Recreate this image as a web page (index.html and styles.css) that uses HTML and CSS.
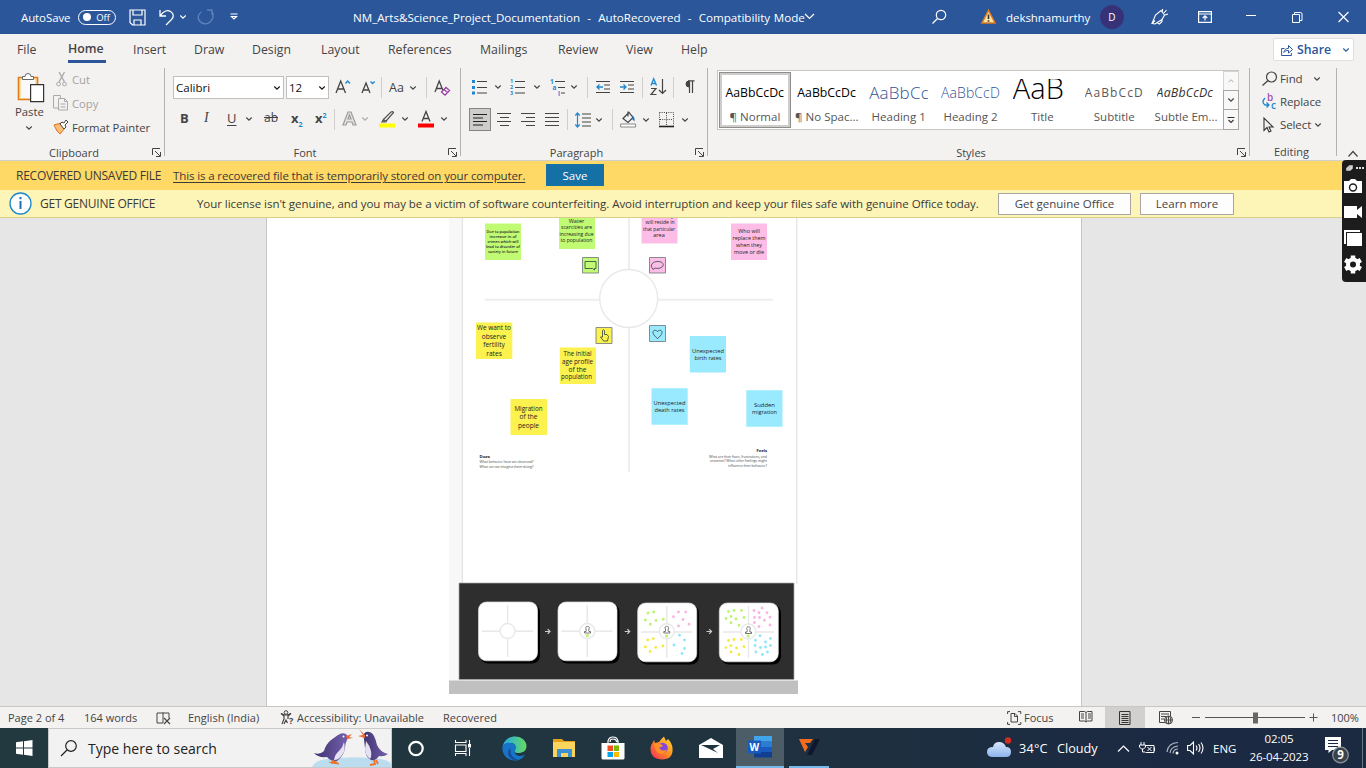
FILE: index.html
```html
<!DOCTYPE html>
<html lang="en">
<head>
<meta charset="utf-8">
<title>NM_Arts&amp;Science_Project_Documentation - Word</title>
<link rel="stylesheet" href="styles.css">
</head>
<body>
<svg class="defs" width="0" height="0">
  <symbol id="chev" viewBox="0 0 8 6"><path d="M1.300 1.500 4 4.200 6.700 1.500" fill="none" stroke="currentColor" stroke-width="1.150"/></symbol>
  <symbol id="launch" viewBox="0 0 9 9"><path d="M.5 7V.5H8M3 3l5 5M8.500 4v4.500H4" fill="none" stroke="#444" stroke-width="1"/></symbol>
  <symbol id="person" viewBox="0 0 8 9"><path d="M2.800 4.500C1.500 1 3 .8 4 .8S6.500 1 5.200 4.500L5.500 6H7v1.500H1V6h1.500z" fill="none" stroke="#555" stroke-width=".8"/></symbol>
</svg>
<div class="app">
  <header class="title">
    <span class="autosave">AutoSave</span>
    <span class="toggle"><i></i><b>Off</b></span>
    <svg width="17" height="17"><path d="M1 1h15v15H3.500L1 13.500zM4 1v5h9V1M5 16v-5h7v5" fill="none" stroke="#fff" stroke-width="1.200"/></svg>
    <svg width="16" height="18"><path d="M1 2v6h6M1.500 7.500C4 4 8 1.500 11.500 3.500s3.500 5.500 1 8L7 17" fill="none" stroke="#fff" stroke-width="1.300"/></svg>
    <svg width="8" height="6"><use href="#chev"/></svg>
    <svg width="17" height="17" class="dim"><path d="M10 1h5v5M15 2c2 4 1 8-2 11s-8 2-10.500-1S1 5 4.500 3" fill="none" stroke="#7fa0d4" stroke-width="1.300"/></svg>
    <svg width="8" height="8"><path d="M.5 1h7M1.500 3.500 4 6l2.500-2.500z" fill="none" stroke="#fff" stroke-width="1.200"/></svg>
    <span class="docname">NM_Arts&amp;Science_Project_Documentation &nbsp;-&nbsp; AutoRecovered &nbsp;-&nbsp; Compatibility Mode</span>
    <svg width="12" height="8" viewBox="0 0 12 8"><path d="m1 1 4.500 4.500L10 1" fill="none" stroke="#fff" stroke-width="1.200"/></svg>
    <svg width="15" height="16"><circle cx="9" cy="6" r="4.700" fill="none" stroke="#fff" stroke-width="1.200"/><path d="m5.500 9.500-5 5" stroke="#fff" stroke-width="1.300"/></svg>
    <svg width="16" height="16"><path d="M7.500 1.500 14 14H1z" fill="#fce4a6" stroke="#e07b1e" stroke-width="1.500"/><path d="M6.700 5.500h1.600v4.500H6.700zM6.700 11.200h1.600v1.600H6.700z" fill="#333"/></svg>
    <span class="user">dekshnamurthy</span>
    <span class="avatar">D</span>
    <svg width="18" height="18"><path d="M1 15.500 4.500 7 10 2.500 13.500 7 11 11.500 4 16 1 15.500 4 12.500M6 14.500 8.500 16l2.500-2.500v-2M11.500 3.500V1M13 5l2.500-3M14 7l3-1" fill="none" stroke="#fff" stroke-width="1.100"/></svg>
    <svg width="14" height="12"><path d="M.6.6h12.800v10.800H.6zM.6 3h12.800M7 9.500V5M4.700 7 7 4.800 9.300 7" fill="none" stroke="#fff" stroke-width="1.200"/></svg>
    <svg width="11" height="12"><path d="M0 4.500h10" stroke="#fff" stroke-width="1"/></svg>
    <svg width="11" height="11"><path d="M.5 2.500h7v8h-7zM2.500 2V.5h6q1.500 0 1.500 1.500v6.500H8" fill="none" stroke="#fff"/></svg>
    <svg width="11" height="11"><path d="m.5 0 10 10m0-10-10 10" stroke="#fff" stroke-width="1.200"/></svg>
  </header>

  <nav class="tabs">
    <span>File</span><span class="on">Home</span><span>Insert</span><span>Draw</span><span>Design</span><span>Layout</span><span>References</span><span>Mailings</span><span>Review</span><span>View</span><span>Help</span>
    <div class="share"><svg width="12" height="12"><path d="M3.500 4.500H.6v7h9.800V9M2.800 8.500C3.500 5.500 5 4.300 7.500 4.300V1.500l4 4-4 3.600V6.500C5.500 6.300 4 7 2.800 8.500z" fill="none" stroke="#2b579a"/></svg><b>Share</b><svg width="8" height="6"><use href="#chev"/></svg></div>
  </nav>

  <section class="ribbon">
    <div class="group clip">
      <div class="body">
        <div class="paste">
          <svg width="28" height="31"><path d="M1.500 5.500h19v22h-19z" fill="#fbe3a8" stroke="#e07b1e" stroke-width="1.600"/><path d="M4 8h14v18H4z" fill="#fafafa"/><path d="M5.500 7.500v-3H8a3 3 0 0 1 6 0h2.500v3z" fill="#fff" stroke="#666"/><path d="M13.600 12.600h13v17h-13z" fill="#fff" stroke="#333" stroke-width="1.200"/></svg>
          <span>Paste</span><svg width="8" height="6"><use href="#chev"/></svg>
        </div>
        <div class="cmds">
          <div class="off"><svg width="14" height="16"><path d="m3 1 5.500 10M8.500 1 3 11" stroke="#aaa" stroke-width="1.400"/><circle cx="2.600" cy="13" r="1.900" fill="none" stroke="#aaa"/><circle cx="8.500" cy="13" r="1.900" fill="none" stroke="#aaa"/></svg><span>Cut</span></div>
          <div class="off"><svg class="cp" width="16" height="16"><path d="M5 13H.5V.5h7V3M5.500 3.500h6l3 3v8.500h-9zM11.500 3.500v3h3M7.500 9h5M7.500 12h5" fill="none" stroke="#aaa"/></svg><span>Copy</span></div>
          <div><svg class="cp" width="16" height="16"><path d="m1 6 7-2 4 5-5 6-3-3z" fill="#f9bd7c" stroke="#e0731a"/><path d="m7 5 2-2 2 1 2-3 2 2-3 3 1 2-2 2z" fill="#fff" stroke="#444"/></svg><span>Format Painter</span></div>
        </div>
      </div>
      <div class="label"><span>Clipboard</span><svg width="9" height="9"><use href="#launch"/></svg></div>
    </div>

    <div class="group font">
      <div class="body">
        <div class="row f1">
          <div class="combo">Calibri<svg width="8" height="6"><use href="#chev"/></svg></div>
          <div class="combo">12<svg width="8" height="6"><use href="#chev"/></svg></div>
          <svg width="16" height="18"><path d="m1 14 4.700-12L10.500 14M2.500 10h6.500" fill="none" stroke="#444" stroke-width="1.300"/><path d="m10.500 4.500 2.200-2.500L15 4.500" fill="none" stroke="#1e88d0" stroke-width="1.400"/></svg>
          <svg width="15" height="18"><path d="m1 14 4-10L9 14M2.300 11h5.500" fill="none" stroke="#444" stroke-width="1.300"/><path d="M9.500 2.500 11.600 4.500 13.700 2.500" fill="none" stroke="#1e88d0" stroke-width="1.400"/></svg>
          <i class="sep"></i>
          <span class="aa">Aa</span><svg width="8" height="6"><use href="#chev"/></svg>
          <i class="sep"></i>
          <svg width="17" height="18"><path d="m1 13 4.200-11L9.500 13M2.500 9.500h5" fill="none" stroke="#444" stroke-width="1.300"/><path d="m7.500 13 4.500-4.500 3.500 3-4.500 4.500zM10 10.500l3.500 3" fill="#fff" stroke="#9b3fa8" stroke-width="1.300"/></svg>
        </div>
        <div class="row f2">
          <b class="g">B</b><i class="g it">I</i><span class="g un">U</span><svg width="8" height="6"><use href="#chev"/></svg>
          <span class="g st">ab</span><span class="g"><b>x</b><sub>2</sub></span><span class="g"><b>x</b><sup>2</sup></span>
          <i class="sep"></i>
          <svg width="16" height="18"><path d="M1 15 6 2h3l5 13h-3l-1-3H5l-1 3zM6 9h3L7.500 5z" fill="#e4e4e4" stroke="#9a9a9a" stroke-width="1.200"/></svg><svg width="8" height="6" class="lite"><use href="#chev"/></svg>
          <svg width="17" height="18"><path d="M0 13.500h16v4H0z" fill="#ff0"/><path d="m5 9 7-7q2-1 2.500.5L8 10l-3 1zM5 8.500 3 12h4l1-2" fill="none" stroke="#555" stroke-width="1.200"/></svg><svg width="8" height="6"><use href="#chev"/></svg>
          <svg width="17" height="18"><path d="M0 13.500h16v4H0z" fill="#f00"/><path d="m4 11.500 4-10L12 11.500M5.300 8.500h5.400" fill="none" stroke="#444" stroke-width="1.300"/></svg><svg width="8" height="6"><use href="#chev"/></svg>
        </div>
      </div>
      <div class="label"><span>Font</span><svg width="9" height="9"><use href="#launch"/></svg></div>
    </div>

    <div class="group para">
      <div class="body">
        <div class="row p1">
          <svg width="17" height="16"><path d="M0 1h3v3H0zM0 7h3v3H0zM0 12.500h3v3H0z" fill="#1e88d0"/><path d="M5 2.500h10M5 8.500h10M5 14h10" stroke="#444" stroke-width="1.200"/></svg><svg width="8" height="6"><use href="#chev"/></svg>
          <svg width="17" height="16"><path d="M5 2.500h10M5 8.500h10M5 14h10" stroke="#444" stroke-width="1.200"/><g fill="#1e88d0" font-size="5.500" font-weight="700"><text y="4">1</text><text y="10">2</text><text y="16">3</text></g></svg><svg width="8" height="6"><use href="#chev"/></svg>
          <svg width="17" height="17"><path d="M5 2.500h10M8 8.500h7M11 14h4" stroke="#444" stroke-width="1.200"/><g fill="#1e88d0" font-size="6.500" font-weight="700"><text y="4.500">1</text><text x="2.500" y="11">a</text><text x="8" y="17">i</text></g></svg><svg width="8" height="6"><use href="#chev"/></svg>
          <i class="sep"></i>
          <svg width="15" height="14"><path d="M0 1.500h14M8 5h6M8 9h6M0 12.500h14" stroke="#444" stroke-width="1.200"/><path d="M7 7H1m2.500-2.500L1 7l2.500 2.500" fill="none" stroke="#1e88d0" stroke-width="1.300"/></svg>
          <svg width="15" height="14"><path d="M0 1.500h14M8 5h6M8 9h6M0 12.500h14" stroke="#444" stroke-width="1.200"/><path d="M0 7h6M3.500 4.500 6 7 3.500 9.500" fill="none" stroke="#1e88d0" stroke-width="1.300"/></svg>
          <i class="sep"></i>
          <svg width="17" height="18"><path d="m1 7.500 2.700-6.700L6.500 7.500M2 5.500h3.500" fill="none" stroke="#1e88d0" stroke-width="1.300"/><path d="M1 10.500h5L1 16.500h5.500M12.500 1v14M9 12l3.500 3.500L16 12" fill="none" stroke="#444" stroke-width="1.200"/></svg>
          <i class="sep"></i>
          <svg width="11" height="14"><path d="M5 1v6a3 3 0 0 1 0-6z" fill="#444" stroke="#444"/><path d="M4 .8h6.500M5.500 1v12M8.500 1v12" stroke="#444" stroke-width="1.200"/></svg>
        </div>
        <div class="row p2">
          <span class="active"><svg width="15" height="14"><path d="M0 1.500h14M0 5h10M0 8.500h14M0 12h10" stroke="#222" stroke-width="1.200"/></svg></span>
          <svg width="15" height="14"><path d="M0 .5h14M3 4.500h9M0 8.500h14M3 12.500h9" stroke="#444" stroke-width="1.200"/></svg>
          <svg width="15" height="14"><path d="M0 .5h14M5 4.500h9M0 8.500h14M5 12.500h9" stroke="#444" stroke-width="1.200"/></svg>
          <svg width="15" height="14"><path d="M0 .5h14M0 4.500h14M0 8.500h14M0 12.500h14" stroke="#444" stroke-width="1.200"/></svg>
          <i class="sep"></i>
          <svg width="17" height="16"><path d="M7 2h9M7 6h9M7 10h9M7 14h9" stroke="#444" stroke-width="1.200"/><path d="M2.500 1v14M.3 3.500 2.500 1l2.200 2.500M.3 12.500 2.500 15l2.200-2.500" fill="none" stroke="#1e88d0" stroke-width="1.200"/></svg><svg width="8" height="6"><use href="#chev"/></svg>
          <i class="sep"></i>
          <svg width="17" height="18"><path d="M.6 13h15v3H.6z" fill="#fff" stroke="#888"/><path d="m3 7.500 6-6 4 5-5 5zM8 .5v5" fill="none" stroke="#444" stroke-width="1.200"/><path d="M12 4.500q3 1 2.500 6l-2-2z" fill="#1e70b8"/></svg><svg width="8" height="6"><use href="#chev"/></svg>
          <svg width="16" height="16"><path d="M.5.5h14v13M.5.5v13M7.500 1v13M1 7.500h13" fill="none" stroke="#444" stroke-dasharray="1 1.200"/><path d="M0 14.500h15" stroke="#222" stroke-width="1.600"/></svg><svg width="8" height="6"><use href="#chev"/></svg>
        </div>
      </div>
      <div class="label"><span>Paragraph</span><svg width="9" height="9"><use href="#launch"/></svg></div>
    </div>

    <div class="group styles">
      <div class="body">
        <div class="gallery">
          <div class="st1 sel"><p>AaBbCcDc</p><span>¶ Normal</span></div>
          <div class="st1"><p>AaBbCcDc</p><span>¶ No Spac...</span></div>
          <div class="st1 h1"><p>AaBbCc</p><span>Heading 1</span></div>
          <div class="st1 h2"><p>AaBbCcD</p><span>Heading 2</span></div>
          <div class="st1 ti"><p>AaB</p><span>Title</span></div>
          <div class="st1 su"><p>AaBbCcD</p><span>Subtitle</span></div>
          <div class="st1 em"><p>AaBbCcDc</p><span>Subtle Em...</span></div>
          <div class="scroll">
            <i><svg width="8" height="6" viewBox="0 0 8 6"><path d="m1.500 4.200 2.500-2.500 2.500 2.500" fill="none" stroke="#aaa"/></svg></i>
            <i><svg width="8" height="6"><use href="#chev"/></svg></i>
            <i><svg width="8" height="8"><path d="M.5 1.500h7M1.500 4 4 6.500 6.500 4" fill="none" stroke="#333" stroke-width="1.100"/></svg></i>
          </div>
        </div>
      </div>
      <div class="label"><span>Styles</span><svg width="9" height="9"><use href="#launch"/></svg></div>
    </div>

    <div class="group edit">
      <div class="body">
        <div><svg width="18" height="16"><circle cx="10.500" cy="6" r="5" fill="none" stroke="#444" stroke-width="1.200"/><path d="m7 9.500-5.500 5" stroke="#444" stroke-width="1.300"/></svg><span class="find">Find</span><svg width="8" height="6"><use href="#chev"/></svg></div>
        <div><svg width="18" height="18"><g font-size="10" font-weight="600"><text x="6" y="8" fill="#a64db3">b</text><text x="10" y="16" fill="#1e88d0">c</text></g><path d="M4 5q-4 4 0 7h4M5.500 9.500 8 12l-2.500 2.500" fill="none" stroke="#1e88d0" stroke-width="1.300"/></svg><span>Replace</span></div>
        <div><svg width="18" height="16"><path d="M3 1v12.500l3-3 2 4.500 2-1-2-4h4z" fill="none" stroke="#333" stroke-width="1.100"/></svg><span class="sele">Select</span><svg width="8" height="6"><use href="#chev"/></svg></div>
      </div>
      <div class="label"><span>Editing</span></div>
    </div>
    <div class="collapse"><svg width="12" height="8"><path d="m1.500 6.500 4.500-5 4.500 5" fill="none" stroke="#444" stroke-width="1.200"/></svg></div>
  </section>

  <div class="bar recovered"><span class="rh">RECOVERED UNSAVED FILE</span><span class="rl"><u>This is a recovered file that is temporarily stored on your computer.</u></span><button>Save</button></div>
  <div class="bar genuine"><svg width="23" height="23"><circle cx="11.500" cy="11.500" r="10.500" fill="#fff" stroke="#1e88c8" stroke-width="1.300"/><path d="M10.500 9h2v8h-2zM10.500 5h2v2.200h-2z" fill="#1e70b8"/></svg><span class="gh">GET GENUINE OFFICE</span><span class="gt">Your license isn't genuine, and you may be a victim of software counterfeiting. Avoid interruption and keep your files safe with genuine Office today.</span><button class="b1">Get genuine Office</button><button class="b2">Learn more</button></div>

  <main class="desk">
    <div class="page">
      <svg class="board" width="350" height="488" viewBox="449 218 350 488">
        <path d="M449 218h13v463h-13z" fill="#f8f8f8"/>
        <path d="M462.300 218v366M796.800 218v366" stroke="#ddd" fill="none"/>
        <path d="M485 299.800h288M629 218v254" stroke="#eee" stroke-width="2"/>
        <circle cx="628.700" cy="298.500" r="29" fill="#fff" stroke="#e8e8e8" stroke-width="1.300"/>
        <g fill="#c1fb74"><path d="M485 223.500h36V260h-36zM559 212h36v37h-36zM582.500 257.500h16v15.500h-16z"/></g>
        <g fill="#fdbde6"><path d="M641.500 207h36v36.500h-36zM731 223.500h36V260h-36zM649.500 257.500h16v15.500h-16z"/></g>
        <g fill="#fbf24f"><path d="M476 322.500h36.300V359H476zM559.800 347.500H596V384h-36.200zM510.500 399H547v36h-36.500zM596 327.500h16v16h-16z"/></g>
        <g fill="#99eaff"><path d="M689.800 336H726v36.500h-36.200zM651.500 388.200h36.200v36.500h-36.200zM746.300 390.200h36.200v36.500h-36.200zM649.500 325.500h16v16h-16z"/></g>
        <g fill="none" stroke="#344" stroke-width=".8">
          <path d="M582.500 257.500h16v15.500h-16zM649.500 257.500h16v15.500h-16zM596 327.500h16v16h-16zM649.500 325.500h16v16h-16z" stroke="#6b7377"/>
          <path d="M585 261.500h11v7h-1.500v1.500l-2-1.500H585z"/>
          <path d="M653 269.500c-4-5 0-8 5-8s6.500 3.500 4 5.500-6 1.500-7 1z"/>
          <path d="M602.500 337v-6.500q1-1.500 2 0v4h2.500l1.500 2-1 4.500h-4l-3-4z"/>
          <path d="M657.500 338.500c-8-6-3.500-10.500 0-7 3.500-3.500 8 1 0 7z"/>
        </g>
        <g class="note s5" text-anchor="middle">
          <text x="503" y="233" textLength="33" lengthAdjust="spacingAndGlyphs">Due to population</text><text x="503" y="238" textLength="27" lengthAdjust="spacingAndGlyphs">increase in  of</text><text x="503" y="243" textLength="31" lengthAdjust="spacingAndGlyphs">crimes which will</text><text x="503" y="248" textLength="34" lengthAdjust="spacingAndGlyphs">lead to disorder of</text><text x="503" y="253" textLength="30" lengthAdjust="spacingAndGlyphs">society in future</text>
        </g>
        <g class="note s6" text-anchor="middle">
          <text x="576.500" y="222.500">Water</text><text x="576.500" y="229.300" textLength="31" lengthAdjust="spacingAndGlyphs">scarcities are</text><text x="576.500" y="235.600" textLength="34" lengthAdjust="spacingAndGlyphs">increasing due</text><text x="576.500" y="242" textLength="32" lengthAdjust="spacingAndGlyphs">to population</text>
          <text x="660" y="217.500">How many</text><text x="660" y="224" textLength="29" lengthAdjust="spacingAndGlyphs">will reside in</text><text x="659" y="230.500" textLength="32" lengthAdjust="spacingAndGlyphs">that particular</text><text x="659" y="237">area</text>
          <text x="749" y="233">Who will</text><text x="749" y="240" textLength="33" lengthAdjust="spacingAndGlyphs">replace them</text><text x="749" y="247" textLength="26" lengthAdjust="spacingAndGlyphs">when they</text><text x="749" y="254" textLength="30" lengthAdjust="spacingAndGlyphs">move or die</text>
          <text x="708" y="353" textLength="32" lengthAdjust="spacingAndGlyphs">Unexpected</text><text x="708" y="360" textLength="27" lengthAdjust="spacingAndGlyphs">birth rates</text>
          <text x="669.500" y="405" textLength="32" lengthAdjust="spacingAndGlyphs">Unexpected</text><text x="669.500" y="412" textLength="30" lengthAdjust="spacingAndGlyphs">death rates</text>
          <text x="764.500" y="407" textLength="21" lengthAdjust="spacingAndGlyphs">Sudden</text><text x="764.500" y="414" textLength="25" lengthAdjust="spacingAndGlyphs">migration</text>
        </g>
        <g class="note s7" text-anchor="middle">
          <text x="494" y="330" textLength="34" lengthAdjust="spacingAndGlyphs">We want to</text><text x="494" y="338.700">observe</text><text x="494" y="347.300">fertility</text><text x="494" y="356">rates</text>
          <text x="577.500" y="356" textLength="28" lengthAdjust="spacingAndGlyphs">The initial</text><text x="577.500" y="363.800" textLength="31" lengthAdjust="spacingAndGlyphs">age profile</text><text x="577.500" y="371.600">of the</text><text x="576.500" y="379.400" textLength="31" lengthAdjust="spacingAndGlyphs">population</text>
          <text x="528.500" y="411" textLength="28" lengthAdjust="spacingAndGlyphs">Migration</text><text x="528.500" y="419.300">of the</text><text x="528.500" y="427.600">people</text>
        </g>
        <g class="cap"><text x="479.500" y="457.500" font-weight="700" fill="#111" textLength="10.500" lengthAdjust="spacingAndGlyphs">Does</text><text x="479.500" y="463" textLength="54">What behavior have we observed?</text><text x="479.500" y="467.500" textLength="54">What can we imagine them doing?</text>
        <g text-anchor="end"><text x="767" y="452" font-weight="700" fill="#111" textLength="10.500" lengthAdjust="spacingAndGlyphs">Feels</text><text x="767" y="457.500" textLength="58">What are their fears, frustrations, and</text><text x="767" y="462" textLength="57">anxieties? What other feelings might</text><text x="767" y="466.500" textLength="39">influence their behavior?</text></g></g>
        <path d="M459 583h335v96.500H459z" fill="#2e2e2e" stroke="#aaa" stroke-width=".7"/>
        <path d="M449 680.500h349V694H449z" fill="#c0c0c0"/>
        <g fill="#000"><rect x="480" y="604" width="60" height="59.500" rx="8"/><rect x="559.500" y="604" width="60" height="59.500" rx="8"/><rect x="639" y="605" width="60" height="59.500" rx="8"/><rect x="721" y="605" width="60" height="59.500" rx="8"/></g>
        <g fill="#fff" stroke="#ddd" stroke-width=".7"><rect x="478.500" y="602" width="59" height="58.800" rx="8"/><rect x="558" y="602" width="59" height="58.800" rx="8"/><rect x="637.700" y="603" width="59" height="58.800" rx="8"/><rect x="719.300" y="603" width="59" height="58.800" rx="8"/></g>
        <g fill="#fff" stroke="#e8e8e8" stroke-width="1.400"><path d="M507.600 605v52M482 631.200h51M587.200 605v52M561.500 631.200h51M666.800 606v52M641 632h51M748.500 606v52M723 632h51"/><circle cx="507.600" cy="631" r="7.500"/><circle cx="587.300" cy="631" r="7.500"/><circle cx="666.800" cy="631.300" r="7.500"/><circle cx="748.400" cy="631.500" r="7.500"/></g>
        <g fill="#b6f36a"><circle cx="587.300" cy="635.500" r="1.600"/><circle cx="666.600" cy="636" r="1.600"/><circle cx="748.200" cy="636" r="1.600"/></g>
        <use href="#person" x="583" y="625.500" width="9" height="9"/><use href="#person" x="662.300" y="625.500" width="9" height="9"/><use href="#person" x="744" y="626" width="9" height="9"/>
        <path d="M545 631.500h5m-2.300-2.300 2.300 2.300-2.300 2.300M624.700 631.500h5m-2.300-2.300 2.300 2.300-2.300 2.300M706.500 631.500h5m-2.300-2.300 2.300 2.300-2.300 2.300" fill="none" stroke="#ccc" stroke-width="1.200"/>
        <g fill="none" stroke-width="2.900" stroke-linecap="round">
          <path stroke="#b9f66f" d="M648 613h0M653.700 612h0M645.300 620h0M656 620.400h0M650.300 624.300h0M663.300 619.300h0M728.500 611.500h0M734 610.500h0M741.500 610.500h0M726 618.500h0M731 616.500h0M736 619h0M744 617.500h0M731 622.700h0M739 625.300h0"/>
          <path stroke="#fbb5e2" d="M678.500 612h0M685.700 612h0M673.500 616.800h0M683 619.500h0M689 624.300h0M678.500 626h0M754 610.500h0M762 608h0M759 612.700h0M767 612.700h0M754.500 617.500h0M759.500 617.500h0M764.500 620.300h0M770 617.300h0M754.500 622.500h0M759 626.500h0M770 625h0"/>
          <path stroke="#f7e93e" d="M647.700 640h0M653.300 638.600h0M645.300 647h0M655.700 647.400h0M650 651.400h0M663 646h0M728.500 640.500h0M734 639.500h0M741.300 639.500h0M726 647.600h0M731 645.600h0M736.500 648h0M744 646.700h0M731 652h0M739 654.500h0"/>
          <path stroke="#8fe6fb" d="M679.500 635.200h0M684.500 640h0M674 645h0M684.500 648.500h0M682 653.500h0M760 635.700h0M755.500 640.300h0M765.500 642h0M770.500 638.500h0M755 645.500h0M760.500 647.500h0M765.500 647h0M770.500 645.500h0M756 652h0M762.500 654.500h0M767.500 652h0"/>
        </g>
      </svg>
    </div>
  </main>

  <footer class="status">
    <span>Page 2 of 4</span><span>164 words</span>
    <svg width="16" height="14"><path d="M7 2H1v10h6M7 12V1.500M7 2h6v5" fill="none" stroke="#444"/><path d="m8 7 6 6m0-6-6 6" stroke="#444" stroke-width="1.200"/></svg>
    <span>English (India)</span>
    <svg width="15" height="16"><circle cx="6" cy="2.500" r="1.800" fill="none" stroke="#444"/><path d="m1 3.500 3 2.500v3l-2 5M11 3.500 8 6v3M1 3.500q5 3 10 0M4 14l2-4 1.500 3" fill="none" stroke="#444" stroke-width="1.200"/><text x="9" y="14" font-size="9" font-weight="700" fill="#444">?</text></svg>
    <span class="acc">Accessibility: Unavailable</span><span class="acc">Recovered</span>
    <svg width="15" height="14"><path d="M3 .6H.6V3M11 .6h2.800V3M3 13.400H.6V11M11 13.400h2.800V11M4 2.500h4L10.500 5v6H4zM7.500 2.500v3h3" fill="none" stroke="#444"/></svg>
    <span class="acc">Focus</span>
    <svg width="14" height="13"><path d="M.5.500h5l1.500 1 1.500-1h4.500v9.500H8.500l-1.500 1-1.500-1h-5zM7 1.500v9.500M2 3h3M2 5h3M2 7h3M9 3h3M9 5h3M9 7h3" fill="none" stroke="#444"/></svg>
    <span class="view"><svg width="12" height="14"><path d="M.5.5h10.500v13H.5zM2.500 3.500h7M2.500 5.500h7M2.500 7.500h7M2.500 9.500h7M2.500 11.500h7" fill="none" stroke="#333"/></svg></span>
    <svg width="15" height="14"><path d="M6 11.500H.5V.5h11V5M2 3h8M2 5.500h5M2 8h3" fill="none" stroke="#444"/><circle cx="9.500" cy="9" r="4" fill="#f3f2f1" stroke="#444"/><path d="M5.500 9h8M9.500 5v8M8 5.500q-1.500 3.500 0 7M11 5.500q1.500 3.500 0 7" fill="none" stroke="#444"/></svg>
    <svg width="122" height="12"><path d="M-4 5.500h8M9 5.500h100M113.500 5.500h8M117.500 1.500v8" stroke="#555"/><path d="M57 .5h5v11h-5z" fill="#666"/></svg>
    <span class="pct">100%</span>
  </footer>

  <footer class="task">
    <svg width="17" height="16"><path d="M0 2.300 7 1.300v6.200H0zM8 1.200 16.500 0v7.500H8zM0 8.500h7v6.200l-7-1zM8 8.500h8.500V16L8 14.800z" fill="#fff"/></svg>
    <div class="search">
      <svg width="18" height="18"><circle cx="11" cy="7" r="5.300" fill="none" stroke="#222" stroke-width="1.200"/><path d="m7 11-6 6" stroke="#222" stroke-width="1.300"/></svg><span>Type here to search</span>
      <svg width="80" height="38" viewBox="311 729 80 38">
        <defs><linearGradient id="pg"><stop stop-color="#3f3270"/><stop offset="1" stop-color="#7461ad"/></linearGradient></defs>
        <path d="M312 767q4-8 18-8 20-3 40-1 19 1 21 6v3z" fill="#bcdcf0"/>
        <path d="M314 753q6 2 10-2 2-7 7-11l7-5q4-3 8-1 3 3 1 6-2 4-2 8-1 8-8 13-6 1-10-4-9 1-13-4z" fill="url(#pg)"/>
        <path d="M344 742q2 9-2 13-3 5-8 5 1-6 5-9 4-4 5-9z" fill="#e6e1f2"/>
        <path d="m346 736 6-2-3 3 4 1-6 1z" fill="#ef6630"/>
        <path d="m333 760-2 3 8 1-4-3M332 763l-3-1" fill="#f0742e" stroke="#f0742e"/>
        <path d="M364 739q-2-5 2-7 5-1 8 4 2 4 3 9 3 7 11 9-4 3-9 2-3 5-8 4-6-3-6-12z" fill="url(#pg)"/>
        <path d="M366 741q4 5 5 10 1 5-1 8-5-4-5-10z" fill="#e6e1f2"/>
        <path d="m365 738-7-2 5-1-4-6 6 6z" fill="#ef6630"/>
        <path d="m374 760 1 4-5 1M376 760l2 4" fill="none" stroke="#f0742e" stroke-width="1.800"/>
        <circle cx="343.500" cy="736.500" r="1" fill="#fff"/><circle cx="367" cy="735.500" r="1" fill="#fff"/>
      </svg>
    </div>
    <svg width="17" height="17"><circle cx="8" cy="8.500" r="6.700" fill="none" stroke="#fff" stroke-width="2.200"/></svg>
    <svg width="17" height="16"><path d="M.5 0v2.500h10.500V0M.5 5h10.500v6.500H.5zM.5 16v-2.500h10.500V16M14.500 0v4M14.500 8v8" fill="none" stroke="#fff" stroke-width="1.100"/><path d="M13 4h3v3.500h-3z" fill="#fff"/></svg>
    <svg width="25" height="25"><defs><linearGradient id="eg"><stop stop-color="#24a8e4"/><stop offset="1" stop-color="#64db62"/></linearGradient></defs><path d="M.5 11C2 3 8 .5 13 .5c7 0 11.500 5 11.500 9.500 0 5-4 7-8 7s-5-2-3-4c1-3-1-6-5-6-4-.5-7 2-8 4z" fill="url(#eg)"/><path d="M.5 11C1 8 5 6 9 7c5 1 6 5 4 7 0 0-2 5 5 6 3 0 5-1.500 5-1.500-2 4-6 6-10.500 6C4.500 24.500-.5 17 .5 11z" fill="#1675c8"/><path d="M9 12c-2 5 2 11 8 12-9 2-15-8-8-12z" fill="#174e97"/></svg>
    <svg width="23" height="20"><path d="M0 3V1h9l2 2h11v3H0z" fill="#e2a116"/><path d="M0 4h22v15H0z" fill="#fbd45e"/><path d="M4 11h15v8h-4v-4H8v4H4z" fill="#3b91d4"/></svg>
    <svg width="24" height="24"><path d="M7 8V5q1-4 5-4t5 4v3M9 6q0-3 3-3t4 3" fill="none" stroke="#fff" stroke-width="1.200"/><path d="M.5 7h23v15q0 1.500-1.500 1.500H2Q.5 23.500.5 22z" fill="#fff"/><path d="M6.500 9.500H12V15H6.500z" fill="#f25022"/><path d="M13 9.500h5V15h-5z" fill="#7fba00"/><path d="M6.500 16H12v5H6.500z" fill="#00a4ef"/><path d="M13 16h5v5h-5z" fill="#ffb900"/></svg>
    <svg width="24" height="24"><defs><linearGradient id="ff" x1="1" x2="0" y2="1"><stop stop-color="#ffe12e"/><stop offset=".5" stop-color="#ff8a25"/><stop offset="1" stop-color="#f5235c"/></linearGradient></defs><path d="m4 4 1 3 4-1Q11 3 14 .5l2 4.500 2-2q4 4 4.500 9 1 11.500-11 11.500Q0 22.500.5 12q0-3 2-5z" fill="url(#ff)"/><circle cx="12.500" cy="12" r="5.300" fill="#8048db"/><path d="M4 8q4-2 9 1.500-1 2-4 2 2 4.500 8 2-2 5-6.500 4.500-5-1-6.500-10z" fill="#ff8f28"/></svg>
    <svg width="24" height="21"><path d="M0 7 12 0l12 7v13H0z" fill="#fff"/><path d="M2 7h19l-7 4 5 4z" fill="#21333d"/></svg>
    <div class="word"><svg width="25" height="22"><path d="M6 0h18v5.500H6z" fill="#41a5ee"/><path d="M6 5.500h18V11H6z" fill="#2b7cd3"/><path d="M6 11h18v5H6z" fill="#185abd"/><path d="M6 16h18v5.500H6z" fill="#103f91"/><path d="M0 4.500h13v13H0z" fill="#185abd"/><text x="1.500" y="14.500" font-size="10" font-weight="700" fill="#fff">W</text></svg></div>
    <div class="vapp"><svg width="21" height="18"><path d="M0 1h14l-3 4H6l3 4-3 5z" fill="#f36b21"/><path d="M16 1h5L13 17H8z" fill="#0e1630"/></svg></div>
    <svg width="25" height="21"><defs><linearGradient id="cl" x2="0" y2="1"><stop stop-color="#d8e7fb"/><stop offset="1" stop-color="#8db4ee"/></linearGradient></defs><path d="M6 19q-6 0-6-5t6-5q1-5 6-5t7 5q5 0 5 5t-5 5z" fill="url(#cl)"/><circle cx="21" cy="2.500" r="3.200" fill="#d22e20"/></svg>
    <span class="temp">34°C</span><span>Cloudy</span>
    <svg width="13" height="9"><path d="m1 7.500 5.500-5.500L12 7.500" fill="none" stroke="#fff" stroke-width="1.200"/></svg>
    <svg width="17" height="12"><path d="M2 0v3M5 0v3M.5 3h6v2L4.500 7h-2L.5 5zM3.500 7v3H6M7 3.500h8v7H6.500M15.500 5.500V9M8.500 5l4 4m0-4-4 4" fill="none" stroke="#fff"/></svg>
    <svg width="14" height="14"><path d="M1 11Q2 2 12 1.500M4 12q.5-6 8-7M7 12.500Q7.500 8 12 8" fill="none" stroke="#aeb8c2" stroke-width="1.200"/><circle cx="11" cy="12" r="1.500" fill="#fff"/></svg>
    <svg width="18" height="14"><path d="M.6 4.500H3L6.500 1v12L3 9.500H.6zM9 4.500q2 2.500 0 5M11.500 3q3 4 0 8M14 1.500q4 5.500 0 11" fill="none" stroke="#fff" stroke-width="1.100"/></svg>
    <span class="eng">ENG</span>
    <div class="clock"><span>02:05</span><span>26-04-2023</span></div>
    <svg width="26" height="26"><path d="M0 2h16v13H7l-3.500 3v-3H0z" fill="#fff"/><path d="M3 5.500h10M3 8.500h10M3 11.500h10" stroke="#1c2b40"/><circle cx="15.500" cy="20" r="7.800" fill="#39414b" stroke="#8d959c" stroke-width="1.200"/><text x="12.300" y="24" font-size="11.500" font-weight="700" fill="#fff">9</text></svg>
    <i class="edge"></i>
  </footer>

  <aside class="rec">
    <svg width="24" height="122"><path d="m4.500 8 3-2.500h3v3L8 10.500H4.500zM5.500 10 9 6" fill="#ddd" stroke="#aaa"/><path d="M14 7h2v2h-2zM17 7h2v2h-2zM20 7h2v2h-2z" fill="#ddd"/><path d="M2 21h5l2-2h4l2 2h5v12H2z" fill="#fff"/><circle cx="11" cy="27.500" r="3.500" fill="#fff" stroke="#1c1c1c" stroke-width="1.400"/><path d="M2 46h13v4l5-4v12l-5-4v4H2z" fill="#fff"/><path d="M2 70h16v2H4v12H2z" fill="#fff"/><path d="M5 73h15v13H5z" fill="#fff"/><circle cx="11" cy="104.500" r="5" fill="none" stroke="#fff" stroke-width="4"/><path d="M11 95.500v4M11 109.500v4M3.200 100l3.500 2M15.300 107l3.500 2M3.200 109l3.500-2M15.300 102l3.500-2" stroke="#fff" stroke-width="4.500"/></svg>
  </aside>
</div>
</body>
</html>
```

FILE: styles.css
```css
* { box-sizing: border-box; }
body { margin: 0; font-family: "Open Sans", "Noto Sans", sans-serif; font-size: 11.500px; color: #444; overflow: hidden; }
.defs { position: absolute; }
.app { position: relative; width: 1366px; height: 768px; display: flex; flex-direction: column; }
svg { display: block; flex: none; overflow: visible; }
span, b, u, button { white-space: nowrap; }
p { margin: 0; }

.title { height: 34px; background: #2b579a; color: #fff; display: grid; align-items: center; padding-left: 21px; grid-template-columns: 57px 51px 30px 20px 18px 33px 123px 451px 128px 49px 25px 94px 51px 47px 48px 46px 46px 20px; }
.autosave { letter-spacing: -.1px; }
.docname { letter-spacing: 0; word-spacing: .6px; font-size: 11.600px; }
.user { letter-spacing: -.05px; }
.dim { opacity: .6; }
.toggle { width: 38px; height: 15px; border: 1px solid #fff; border-radius: 8px; display: flex; align-items: center; justify-content: space-between; padding: 0 5px 0 4px; font-size: 9.500px; }
.toggle i { width: 8px; height: 8px; border-radius: 50%; background: #fff; }
.toggle b { font-weight: 400; }
.avatar { width: 24px; height: 24px; border-radius: 50%; background: #373277; display: grid; place-items: center; font-size: 10px; }

.tabs { height: 32px; background: #f3f2f1; display: grid; grid-template-columns: 51px 65px 61px 58px 69px 67px 92px 78px 68px 55px 592px 81px; padding-left: 17px; align-items: center; font-size: 12.300px; }
.tabs > span { margin-top: -2px; }
.tabs .on { font-weight: 600; width: 38px; height: 25px; line-height: 22px; border-bottom: 3px solid #2b579a; margin-top: 1px; }
.share { height: 23px; margin-top: -1px; background: #fff; border: 1px solid #e1dfdd; border-radius: 2px; display: flex; align-items: center; color: #2b579a; padding-left: 7px; }
.share b { font-weight: 600; width: 45px; margin-left: 4px; }

.ribbon { height: 95px; background: #f3f2f1; border-bottom: 1px solid #d2d0ce; display: flex; padding-top: 2px; color: #444; }
.group { height: 88px; border-right: 1px solid #b5b3b1; display: flex; flex-direction: column; justify-content: space-between; }
.label { height: 8px; line-height: 8px; display: grid; grid-template-columns: 1fr 9px; align-items: center; padding-right: 3px; text-align: center; font-size: 11px; }
.clip { width: 165px; }
.font { width: 296px; }
.para { width: 247px; }
.styles { width: 542px; }
.edit { width: 87px; }
.clip .label, .para .label, .styles .label { padding-right: 3px; }
.clip .label span { margin-right: 4px; }
.para .label span, .styles .label span, .font .label span { margin-right: 3px; }
.clip .body { display: flex; padding: 4px 0 0 15px; }
.paste { width: 41px; display: flex; flex-direction: column; font-size: 11.300px; }
.paste > svg:first-child { margin-left: 2px; }
.paste span { line-height: 18px; }
.paste svg:last-child { margin: 4px 0 0 10px; }
.cmds { margin-top: -5px; font-size: 11.300px; letter-spacing: -.05px; }
.cmds div { display: grid; grid-template-columns: 16px auto; height: 24px; align-items: center; }
.cp { margin-left: -3px; }
.off { color: #a5a3a1; }
.row { display: grid; height: 22px; align-items: center; justify-items: start; }
.sep { width: 1px; height: 21px; background: #d0cecc; }
.font .row { padding-left: 8px; }
.f1 { margin-top: 8px; grid-template-columns: 113px 49px 26px 20px 8px 20px 17px 8px 20px; }
.combo { width: 111px; height: 23px; border: 1px solid #c2c0be; background: #fff; color: #111; display: flex; align-items: center; justify-content: space-between; padding: 0 2px; }
.combo + .combo { width: 43px; }
.aa { font-size: 12.500px; }
.f2 { margin-top: 10px; grid-template-columns: 24px 23px 19px 18px 27px 24px 19px 9px 19px 18px 22px 17px 22px 12px; }
.font .f2 { padding-left: 15px; }
.g { font-size: 13px; line-height: 18px; margin-top: -2px; }
.it { font-family: "Liberation Serif", serif; font-size: 14px; }
.un { text-decoration: underline; text-underline-offset: 2px; }
.st { text-decoration: line-through; font-size: 12px; }
.f2 svg:nth-of-type(n) { margin-left: -1px; }
sub, sup { font-size: 7px; color: #1e88d0; font-weight: 700; line-height: 0; }
.lite { color: #aaa; }
.para .row { padding-left: 11px; }
.p1 { margin-top: 8px; grid-template-columns: 22px 16px 23px 17px 20px 17px 9px 24px 22px 8px 23px 11px 12px; }
.p2 { margin-top: 10px; grid-template-columns: 28px 24px 24px 22px 8px 20px 17px 8px 22px 17px 22px 12px; }
.para .p2 { padding-left: 8px; }
.active { width: 22px; height: 23px; background: #cfcdcb; border: 1px solid #868482; display: grid; place-items: center; }
.styles .body { padding: 2px 0 0 9px; }
.gallery { width: 522px; height: 60px; background: #fff; border: 1px solid #c8c6c4; display: flex; padding-left: 1px; align-items: center; }
.st1 { width: 72px; height: 56px; display: flex; flex-direction: column; align-items: center; }
.st1.sel { box-shadow: inset 0 0 0 1px #8f8d8b, inset 0 0 0 3px #cfcdcb; }
.st1 p { width: 59px; height: 27px; overflow: hidden; color: #000; font-size: 12.300px; letter-spacing: 0; line-height: 27px; margin-top: 7px; white-space: nowrap; }
.st1 span { font-size: 11.500px; line-height: 19px; color: #555; margin-top: 1px; }
.h1 p { font-size: 17px; font-weight: 300; color: #2f5496; letter-spacing: .2px; }
.h2 p { font-size: 14px; font-weight: 300; color: #2f5496; letter-spacing: .1px; }
.ti p { font-size: 29px; font-weight: 300; line-height: 18px; }
.su p { font-size: 12px; color: #5a5a5a; letter-spacing: 1.100px; }
.em p { font-style: italic; color: #333; letter-spacing: .2px; }
.scroll { width: 15px; margin-left: 1px; align-self: stretch; display: grid; grid-template-rows: 19px 19px 20px; }
.scroll i { border: 1px solid #a9a7a5; display: grid; place-items: center; background: #f8f8f8; margin: 0 -1px -1px 0; }
.scroll i:first-child { border-color: #d5d3d1; }
.edit .body { margin-top: -1px; padding-left: 11px; }
.edit .body div { height: 23px; display: flex; align-items: center; }
.edit .body span { margin-left: 1px; letter-spacing: -.1px; }
.edit .find { width: 33px; }
.edit .sele { width: 34px; }
.edit .label { grid-template-columns: 1fr; }
.collapse { display: flex; align-items: flex-end; padding: 0 0 2px 10px; }

.bar { display: flex; align-items: center; color: #3b3a39; }
.bar button { font: inherit; height: 22px; padding: 0; border: 1px solid #a9a7a5; background: #fdfdfd; color: #444; }
.recovered { height: 29px; background: #ffd965; padding-left: 16px; }
.rh { width: 157px; letter-spacing: -.25px; font-size: 12px; }
.rl { width: 373px; letter-spacing: -.12px; }
.rl u { text-underline-offset: 2px; }
.recovered button { width: 58px; background: #1570a6; border-color: #1570a6; color: #fff; margin-top: -1px; }
.genuine { height: 28px; background: #fdf5b7; border-bottom: 1px solid #d8d08a; padding-left: 9px; }
.gh { width: 157px; margin-left: 8px; letter-spacing: -.25px; font-size: 12px; }
.gt { width: 801px; letter-spacing: -.055px; }
.genuine .b1 { width: 133px; }
.genuine .b2 { width: 94px; margin-left: 9px; }

.desk { height: 488px; background: #e6e6e6; padding-left: 266px; }
.page { width: 816px; height: 488px; background: #fff; border: solid #c6c6c6; border-width: 0 1px; padding-left: 182px; overflow: hidden; }
.note { fill: #222; font-weight: 500; }
.s5 { font-size: 4.100px; font-weight: 600; }
.s6 { font-size: 5.500px; }
.s7 { font-size: 6.600px; }
.cap { font-size: 3.600px; fill: #555; }

.status { height: 22px; background: #f3f2f1; border-top: 1px solid #c8c6c4; display: grid; align-items: center; padding-left: 8px; grid-template-columns: 76px 72px 32px 92px 17px 146px 564px 17px 55px 26px 54px 37px 135px 40px; font-size: 11px; }
.status > span:not(.acc):not(.view) { margin-top: -1px; }
.view { width: 40px; height: 21px; background: #d2d0ce; display: grid; place-items: center; }

.task { height: 40px; background: linear-gradient(90deg, #21393f, #20343f 50%, #1b2942 85%, #1b2941); color: #fff; display: grid; align-items: center; padding-left: 16px; font-size: 12.700px; grid-template-columns: 32px 360px 47px 47px 51px 48px 49px 49px 37px 53px 198px 32px 38px 60px 22px 27px 21px 26px 36px 76px 37px 4px; }
.search { width: 344px; height: 40px; background: #f3f2f2; border: 1px solid #c9c9c9; color: #222; display: grid; grid-template-columns: 28px 223px 80px; align-items: center; padding-left: 11px; font-size: 14px; }
.word { width: 48px; height: 40px; background: #4d5d68; border-bottom: 2px solid #76b9ed; display: grid; place-items: center; }
.vapp { width: 40px; height: 40px; border-bottom: 2px solid #76b9ed; display: grid; place-items: center; }
.temp { letter-spacing: .2px; }
.eng { font-size: 11.500px; }
.clock { width: 60px; display: flex; flex-direction: column; align-items: center; font-size: 11.500px; line-height: 18px; letter-spacing: -.1px; }
.edge { width: 1px; height: 40px; background: #6c7686; }

.rec { position: absolute; left: 1342px; top: 160px; width: 24px; height: 122px; background: #1c1c1c; border-radius: 4px 0 0 4px; }
```
